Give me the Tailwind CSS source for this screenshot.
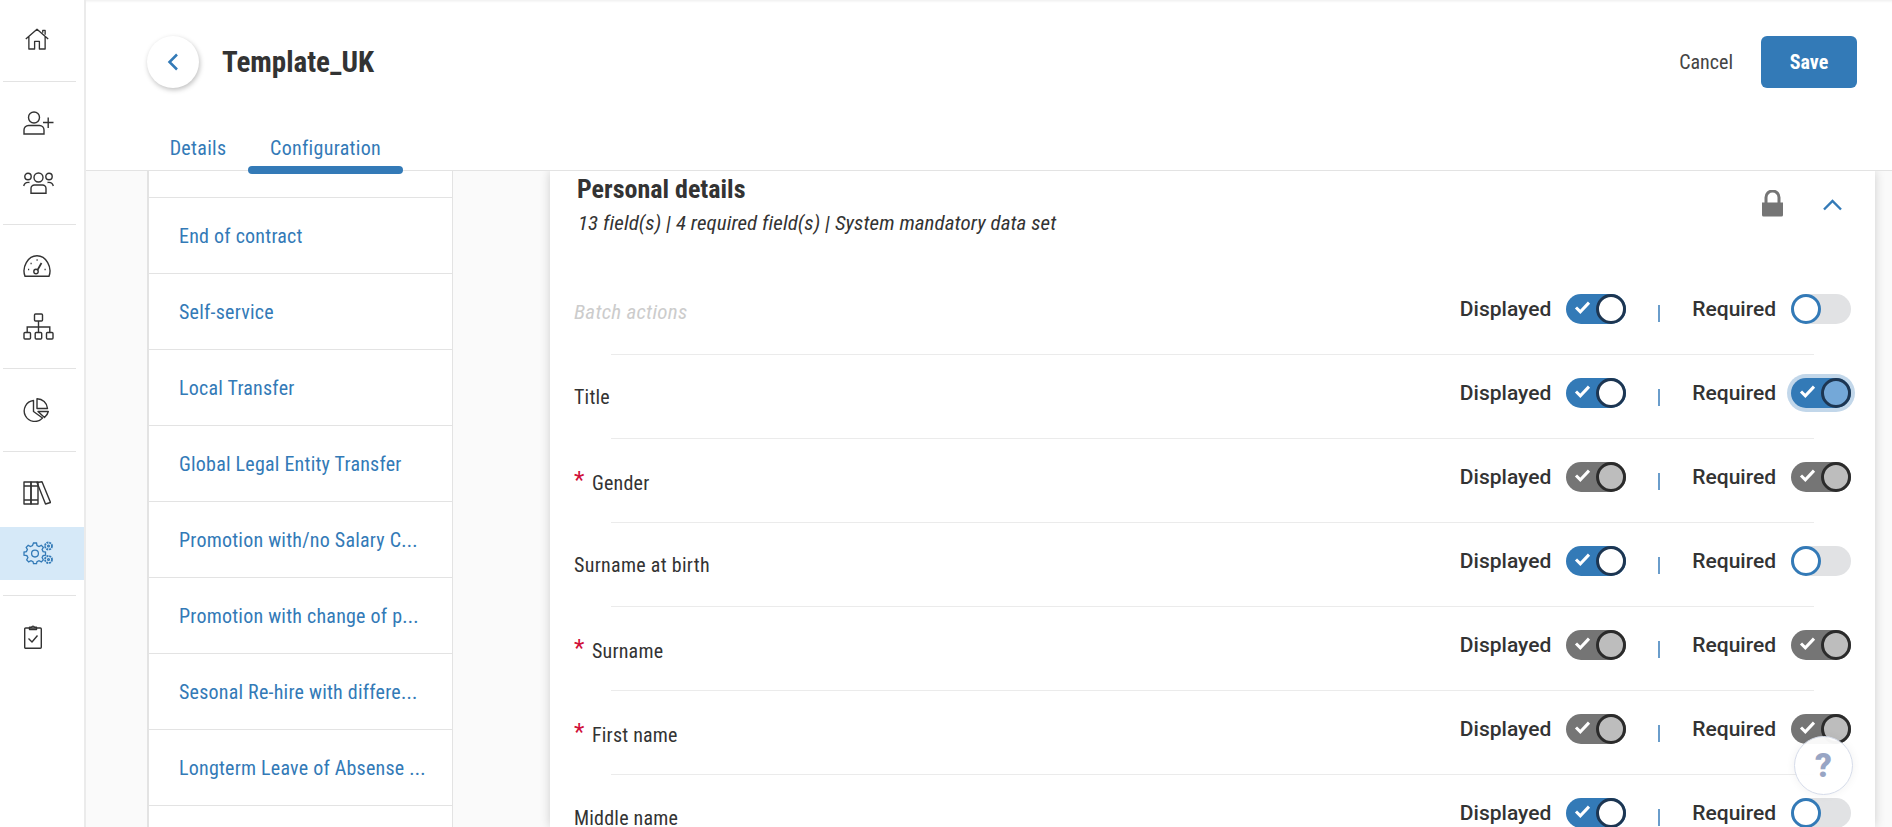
<!DOCTYPE html>
<html>
<head>
<meta charset="utf-8">
<script src="https://cdn.jsdelivr.net/npm/@tailwindcss/browser@4"></script>
</head>
<body class="relative h-[827px] w-[1892px] overflow-hidden bg-white font-['Roboto',sans-serif] [font-stretch:75%] text-[#333]">
<div class="flex h-[827px] w-[1892px]">
  <nav class="flex h-full w-[86px] shrink-0 flex-col border-r-[2px] border-[#ebebeb] bg-white pt-[0px] text-[#333]">
    <div class="h-[81px] pt-[28px] pl-[25px]">
      <svg class="h-[22px] w-[24px]" viewBox="0 0 25 23" fill="none" stroke="currentColor" stroke-width="1.4" stroke-linejoin="round"><path d="M.8 11.500 12.500 1.200 24.200 11.500M4 9V22H10V14H15V22H21V9"/><path d="M18.500 5V2.500H21V7"/></svg>
    </div>
    <div class="ml-[3px] h-px w-[73px] bg-[#e3e3e3]"></div>
    <div class="flex h-[142px] flex-col gap-[37px] pt-[29px] pl-[23px]">
      <svg class="h-[24px] w-[31px]" viewBox="0 0 31 24" fill="none" stroke="currentColor" stroke-width="1.4"><circle cx="11" cy="6.500" r="5.500"/><path d="M1 23V19a4.500 4.500 0 0 1 4.500-4.500H16.500A4.500 4.500 0 0 1 21 19V23Z"/><path d="M20 11.500H30.500M25.200 6.500V17"/></svg>
      <svg class="h-[22px] w-[31px]" viewBox="0 0 31 22" fill="none" stroke="currentColor" stroke-width="1.4"><circle cx="15.500" cy="5.500" r="4.500"/><circle cx="5" cy="4.500" r="3.200"/><circle cx="26" cy="4.500" r="3.200"/><path d="M8 21.300V16.500a3.500 3.500 0 0 1 3.500-3.500h8A3.500 3.500 0 0 1 23 16.500V21.300Z"/><path d="M.7 14C1.500 11 3.500 10 6.500 10.500M30.300 14C29.500 11 27.500 10 24.500 10.500"/></svg>
    </div>
    <div class="ml-[3px] h-px w-[73px] bg-[#e3e3e3]"></div>
    <div class="flex h-[143px] flex-col gap-[36px] pt-[30px] pl-[23px]">
      <svg class="h-[22px] w-[28px]" viewBox="0 0 28 22" fill="none" stroke="currentColor" stroke-width="1.4"><path d="M2 21.300C-1.500 12 5 .8 14 .8S29.500 12 26 21.300Z"/><circle cx="13" cy="16.500" r="2.200"/><path d="M14.500 15 18.500 8" stroke-width="1.700"/><path d="M5 14.500h1.200M7.500 8.500h1.200M13.500 5h1.200M21.500 14.500h1.200" stroke-width="1.500"/></svg>
      <svg class="h-[27px] w-[31px]" viewBox="0 0 31 27" fill="none" stroke="currentColor" stroke-width="1.4"><rect x="11.500" y="1" width="8" height="7" rx="1"/><rect x="1" y="19.500" width="6.500" height="6.500" rx="1"/><rect x="12.200" y="19.500" width="6.500" height="6.500" rx="1"/><rect x="23.500" y="19.500" width="6.500" height="6.500" rx="1"/><path d="M15.500 8V19.500M4.200 19.500V14H26.800V19.500"/></svg>
    </div>
    <div class="ml-[3px] h-px w-[73px] bg-[#e3e3e3]"></div>
    <div class="h-[82px] pt-[29px] pl-[23px]">
      <svg class="h-[24px] w-[26px]" viewBox="0 0 26 24" fill="none" stroke="currentColor" stroke-width="1.4" stroke-linejoin="round"><path d="M10.500 2.500A10.500 10.500 0 1 0 19.500 20L10.500 13.500Z"/><path d="M14 .8A10.500 10.500 0 0 1 24.500 10.500H14Z"/><path d="M15 13.500H25.300A11 11 0 0 1 21.500 19.500Z"/></svg>
    </div>
    <div class="ml-[3px] h-px w-[73px] bg-[#e3e3e3]"></div>
    <div class="h-[75px] pt-[29px] pl-[23px]">
      <svg class="h-[24px] w-[28px]" viewBox="0 0 28 24" fill="none" stroke="currentColor" stroke-width="1.4" stroke-linejoin="round"><rect x="1" y="1" width="7" height="22"/><rect x="8" y="1" width="7" height="22"/><path d="M1 5H15M1 19H15"/><path d="M14 1.500 19 .8 27.500 21.500 22.500 23Z"/></svg>
    </div>
    <div class="h-[53px] w-[84px] bg-[#d6e9f8] pt-[14px] pl-[23px] text-[#337ab7]">
      <svg class="h-[24px] w-[31px]" viewBox="0 0 31 24" fill="none" stroke="currentColor" stroke-width="1.300"><path d="M10.500 4.500h3l.5 2.500 2 1 2.300-1.200 2 2-1.200 2.300 1 2 2.400.5v3l-2.400.5-1 2 1.200 2.300-2 2-2.300-1.200-2 1-.5 2h-3l-.5-2-2-1-2.300 1.200-2-2 1.200-2.300-1-2L1 16.600v-3l2.400-.5 1-2-1.200-2.300 2-2 2.300 1.200 2-1Z" transform="translate(0 -2.500)"/><circle cx="12" cy="12.600" r="3.400"/><circle cx="25.500" cy="5" r="3.500" stroke-dasharray="2 .8" stroke-width="1.800"/><circle cx="25.500" cy="5" r=".9"/><circle cx="25.500" cy="18.500" r="3.500" stroke-dasharray="2 .8" stroke-width="1.800"/><circle cx="25.500" cy="18.500" r=".9"/></svg>
    </div>
    <div class="mt-[15px] ml-[3px] h-px w-[73px] bg-[#e3e3e3]"></div>
    <div class="h-[70px] pt-[29px] pl-[24px]">
      <svg class="h-[24px] w-[18px]" viewBox="0 0 18 24" fill="none" stroke="currentColor" stroke-width="1.400" stroke-linejoin="round"><rect x=".7" y="3" width="16.600" height="20.300" rx="1"/><path d="M5.500 3V2.200H7.500a1.600 1.600 0 0 1 3 0H12.500V4.500H5.500Z"/><path d="M4.500 13.500 8 17 13.500 10.500"/></svg>
    </div>
  </nav>

  <div class="flex min-w-0 flex-1 flex-col">
    <header class="relative h-[171px] shrink-0 border-b border-[#e3e3e3] bg-white shadow-[inset_0_3px_3px_-2px_rgba(0,0,0,0.08)]">
      <div class="flex h-[124px] items-center justify-between pr-[35px] pl-[61px]">
        <div class="flex items-center">
          <div class="flex h-[52px] w-[52px] items-center justify-center rounded-full bg-white shadow-[1px_2px_5px_rgba(0,0,0,0.25)]">
            <svg class="h-[18px] w-[12px]" viewBox="0 0 12 18" fill="none" stroke="#337ab7" stroke-width="2.500"><path d="M10 1.500 2.500 9 10 16.500"/></svg>
          </div>
          <h1 class="ml-[23px] text-[29px] leading-none font-bold text-[#333]">Template_UK</h1>
        </div>
        <div class="flex items-center gap-[28px]">
          <span class="text-[20px] text-[#444]">Cancel</span>
          <button class="flex h-[52px] w-[96px] items-center justify-center rounded-[6px] bg-[#337ab7] text-[20px] font-bold text-white">Save</button>
        </div>
      </div>
      <div class="flex h-[46px] pl-[62px] text-[20px] tracking-[0.3px] text-[#337ab7]">
        <div class="flex h-full w-[100px] items-center justify-center pt-[2px]">Details</div>
        <div class="relative flex h-full w-[155px] items-center justify-center pt-[2px]">Configuration<span class="absolute right-0 bottom-[-4px] left-0 h-[8px] rounded-full bg-[#337ab7]"></span></div>
      </div>
    </header>

    <div class="flex min-h-0 flex-1 bg-[#fafafa]">
      <aside class="ml-[61px] w-[306px] shrink-0 self-start border-r border-l-[2px] border-[#e3e3e3] bg-white text-[20px] tracking-[0.22px] text-[#337ab7]">
        <div class="h-[27px] border-b border-[#e3e3e3]"></div>
        <div class="flex h-[76px] items-center border-b border-[#e3e3e3] pl-[30px]">End of contract</div>
        <div class="flex h-[76px] items-center border-b border-[#e3e3e3] pl-[30px]">Self-service</div>
        <div class="flex h-[76px] items-center border-b border-[#e3e3e3] pl-[30px]">Local Transfer</div>
        <div class="flex h-[76px] items-center border-b border-[#e3e3e3] pl-[30px]">Global Legal Entity Transfer</div>
        <div class="flex h-[76px] items-center border-b border-[#e3e3e3] pl-[30px]">Promotion with/no Salary C...</div>
        <div class="flex h-[76px] items-center border-b border-[#e3e3e3] pl-[30px]">Promotion with change of p...</div>
        <div class="flex h-[76px] items-center border-b border-[#e3e3e3] pl-[30px]">Sesonal Re-hire with differe...</div>
        <div class="flex h-[76px] items-center border-b border-[#e3e3e3] pl-[30px]">Longterm Leave of Absense ...</div>
        <div class="h-[30px]"></div>
      </aside>

      <section class="mr-[17px] ml-[97px] min-w-0 flex-1 bg-white shadow-[0_0_10px_rgba(0,0,0,0.18)]">
        <div class="flex h-[99px] items-start justify-between pr-[33px] pl-[27px]">
          <div>
            <div class="mt-[3px] text-[26px] leading-[30px] font-bold text-[#333]">Personal details</div>
            <div class="mt-[6px] ml-[1px] text-[21px] leading-[26px] tracking-[0.06px] text-[#333] italic">13 field(s) | 4 required field(s) | System mandatory data set</div>
          </div>
          <div class="mt-[19px] flex items-start gap-[40px]">
            <svg class="h-[27px] w-[21px]" viewBox="0 0 21 27" fill="#757575"><path d="M0 12.500H21V25a1.500 1.500 0 0 1-1.500 1.500H1.500A1.500 1.500 0 0 1 0 25Z"/><path d="M4 14V7.500a6.500 6.500 0 0 1 13 0V14" fill="none" stroke="#757575" stroke-width="3"/></svg>
            <svg class="mt-[9px] h-[12px] w-[19px]" viewBox="0 0 19 12" fill="none" stroke="#337ab7" stroke-width="2.400"><path d="M1 10.500 9.500 2 18 10.500"/></svg>
          </div>
        </div>

        <div class="h-[84px] pr-[24px] pl-[24px]">
          <div class="flex h-[83px] items-center justify-between">
            <span class="mt-[3px] text-[21px] tracking-[0.25px] text-[#ccc] italic">Batch actions</span>
            <div class="mb-[6px] flex items-center text-[21px] font-medium [font-stretch:100%] text-[#333]"><span class="mt-[2px]">Displayed</span>
              <span class="relative ml-[15px] flex h-[30px] w-[60px] rounded-full bg-[#337ab7]"><svg class="mt-[7px] ml-[8px] h-[13px] w-[17px]" viewBox="0 0 15 12" fill="none" stroke="white" stroke-width="2.800"><path d="M1.500 6 5.500 10 13.500 1.500"/></svg><span class="absolute right-0 h-[30px] w-[30px] rounded-full border-[3px] border-[#1d3652] bg-white"></span></span>
              <span class="mx-[32px] mt-[9px] h-[17px] w-[2px] bg-[#6a9dcb]"></span><span class="mt-[2px]">Required</span>
              <span class="relative ml-[15px] h-[30px] w-[60px] rounded-full bg-[#e1e2e4]"><span class="absolute left-0 h-[30px] w-[30px] rounded-full border-[3px] border-[#337ab7] bg-white"></span></span>
            </div>
          </div>
          <div class="mt-[1px] mr-[37px] ml-[37px] h-px bg-[#ebebeb]"></div>
        </div>
        <div class="h-[84px] pr-[24px] pl-[24px]">
          <div class="flex h-[83px] items-center justify-between">
            <span class="mt-[3px] text-[20px] tracking-[0.2px] text-[#333]">Title</span>
            <div class="mb-[6px] flex items-center text-[21px] font-medium [font-stretch:100%] text-[#333]"><span class="mt-[2px]">Displayed</span>
              <span class="relative ml-[15px] flex h-[30px] w-[60px] rounded-full bg-[#337ab7]"><svg class="mt-[7px] ml-[8px] h-[13px] w-[17px]" viewBox="0 0 15 12" fill="none" stroke="white" stroke-width="2.800"><path d="M1.500 6 5.500 10 13.500 1.500"/></svg><span class="absolute right-0 h-[30px] w-[30px] rounded-full border-[3px] border-[#1d3652] bg-white"></span></span>
              <span class="mx-[32px] mt-[9px] h-[17px] w-[2px] bg-[#6a9dcb]"></span><span class="mt-[2px]">Required</span>
              <span class="relative ml-[15px] flex h-[30px] w-[60px] rounded-full bg-[#337ab7] shadow-[0_0_0_4px_#c2d7ea]"><svg class="mt-[7px] ml-[8px] h-[13px] w-[17px]" viewBox="0 0 15 12" fill="none" stroke="white" stroke-width="2.800"><path d="M1.500 6 5.500 10 13.500 1.500"/></svg><span class="absolute right-0 h-[30px] w-[30px] rounded-full border-[3px] border-[#1d3652] bg-[#74a8d8]"></span></span>
            </div>
          </div>
          <div class="mt-[1px] mr-[37px] ml-[37px] h-px bg-[#ebebeb]"></div>
        </div>
        <div class="h-[84px] pr-[24px] pl-[24px]">
          <div class="flex h-[83px] items-center justify-between">
            <span class="mt-[7px] flex text-[20px] tracking-[0.2px] text-[#333]"><span class="w-[18px] text-[24px] leading-[24px] text-[#d0103a]">*</span>Gender</span>
            <div class="mb-[6px] flex items-center text-[21px] font-medium [font-stretch:100%] text-[#333]"><span class="mt-[2px]">Displayed</span>
              <span class="relative ml-[15px] flex h-[30px] w-[60px] rounded-full bg-[#757575]"><svg class="mt-[7px] ml-[8px] h-[13px] w-[17px]" viewBox="0 0 15 12" fill="none" stroke="white" stroke-width="2.800"><path d="M1.500 6 5.500 10 13.500 1.500"/></svg><span class="absolute right-0 h-[30px] w-[30px] rounded-full border-[3px] border-[#2b2b2b] bg-[#bdbdbd]"></span></span>
              <span class="mx-[32px] mt-[9px] h-[17px] w-[2px] bg-[#6a9dcb]"></span><span class="mt-[2px]">Required</span>
              <span class="relative ml-[15px] flex h-[30px] w-[60px] rounded-full bg-[#757575]"><svg class="mt-[7px] ml-[8px] h-[13px] w-[17px]" viewBox="0 0 15 12" fill="none" stroke="white" stroke-width="2.800"><path d="M1.500 6 5.500 10 13.500 1.500"/></svg><span class="absolute right-0 h-[30px] w-[30px] rounded-full border-[3px] border-[#2b2b2b] bg-[#bdbdbd]"></span></span>
            </div>
          </div>
          <div class="mt-[1px] mr-[37px] ml-[37px] h-px bg-[#ebebeb]"></div>
        </div>
        <div class="h-[84px] pr-[24px] pl-[24px]">
          <div class="flex h-[83px] items-center justify-between">
            <span class="mt-[3px] text-[20px] tracking-[0.3px] text-[#333]">Surname at birth</span>
            <div class="mb-[6px] flex items-center text-[21px] font-medium [font-stretch:100%] text-[#333]"><span class="mt-[2px]">Displayed</span>
              <span class="relative ml-[15px] flex h-[30px] w-[60px] rounded-full bg-[#337ab7]"><svg class="mt-[7px] ml-[8px] h-[13px] w-[17px]" viewBox="0 0 15 12" fill="none" stroke="white" stroke-width="2.800"><path d="M1.500 6 5.500 10 13.500 1.500"/></svg><span class="absolute right-0 h-[30px] w-[30px] rounded-full border-[3px] border-[#1d3652] bg-white"></span></span>
              <span class="mx-[32px] mt-[9px] h-[17px] w-[2px] bg-[#6a9dcb]"></span><span class="mt-[2px]">Required</span>
              <span class="relative ml-[15px] h-[30px] w-[60px] rounded-full bg-[#e1e2e4]"><span class="absolute left-0 h-[30px] w-[30px] rounded-full border-[3px] border-[#337ab7] bg-white"></span></span>
            </div>
          </div>
          <div class="mt-[1px] mr-[37px] ml-[37px] h-px bg-[#ebebeb]"></div>
        </div>
        <div class="h-[84px] pr-[24px] pl-[24px]">
          <div class="flex h-[83px] items-center justify-between">
            <span class="mt-[7px] flex text-[20px] tracking-[0.2px] text-[#333]"><span class="w-[18px] text-[24px] leading-[24px] text-[#d0103a]">*</span>Surname</span>
            <div class="mb-[6px] flex items-center text-[21px] font-medium [font-stretch:100%] text-[#333]"><span class="mt-[2px]">Displayed</span>
              <span class="relative ml-[15px] flex h-[30px] w-[60px] rounded-full bg-[#757575]"><svg class="mt-[7px] ml-[8px] h-[13px] w-[17px]" viewBox="0 0 15 12" fill="none" stroke="white" stroke-width="2.800"><path d="M1.500 6 5.500 10 13.500 1.500"/></svg><span class="absolute right-0 h-[30px] w-[30px] rounded-full border-[3px] border-[#2b2b2b] bg-[#bdbdbd]"></span></span>
              <span class="mx-[32px] mt-[9px] h-[17px] w-[2px] bg-[#6a9dcb]"></span><span class="mt-[2px]">Required</span>
              <span class="relative ml-[15px] flex h-[30px] w-[60px] rounded-full bg-[#757575]"><svg class="mt-[7px] ml-[8px] h-[13px] w-[17px]" viewBox="0 0 15 12" fill="none" stroke="white" stroke-width="2.800"><path d="M1.500 6 5.500 10 13.500 1.500"/></svg><span class="absolute right-0 h-[30px] w-[30px] rounded-full border-[3px] border-[#2b2b2b] bg-[#bdbdbd]"></span></span>
            </div>
          </div>
          <div class="mt-[1px] mr-[37px] ml-[37px] h-px bg-[#ebebeb]"></div>
        </div>
        <div class="h-[84px] pr-[24px] pl-[24px]">
          <div class="flex h-[83px] items-center justify-between">
            <span class="mt-[7px] flex text-[20px] tracking-[0.2px] text-[#333]"><span class="w-[18px] text-[24px] leading-[24px] text-[#d0103a]">*</span>First name</span>
            <div class="mb-[6px] flex items-center text-[21px] font-medium [font-stretch:100%] text-[#333]"><span class="mt-[2px]">Displayed</span>
              <span class="relative ml-[15px] flex h-[30px] w-[60px] rounded-full bg-[#757575]"><svg class="mt-[7px] ml-[8px] h-[13px] w-[17px]" viewBox="0 0 15 12" fill="none" stroke="white" stroke-width="2.800"><path d="M1.500 6 5.500 10 13.500 1.500"/></svg><span class="absolute right-0 h-[30px] w-[30px] rounded-full border-[3px] border-[#2b2b2b] bg-[#bdbdbd]"></span></span>
              <span class="mx-[32px] mt-[9px] h-[17px] w-[2px] bg-[#6a9dcb]"></span><span class="mt-[2px]">Required</span>
              <span class="relative ml-[15px] flex h-[30px] w-[60px] rounded-full bg-[#757575]"><svg class="mt-[7px] ml-[8px] h-[13px] w-[17px]" viewBox="0 0 15 12" fill="none" stroke="white" stroke-width="2.800"><path d="M1.500 6 5.500 10 13.500 1.500"/></svg><span class="absolute right-0 h-[30px] w-[30px] rounded-full border-[3px] border-[#2b2b2b] bg-[#bdbdbd]"></span></span>
            </div>
          </div>
          <div class="mt-[1px] mr-[37px] ml-[37px] h-px bg-[#ebebeb]"></div>
        </div>
        <div class="h-[84px] pr-[24px] pl-[24px]">
          <div class="flex h-[83px] items-center justify-between">
            <span class="mt-[4px] text-[20px] tracking-[0.2px] text-[#333]">Middle name</span>
            <div class="mb-[6px] flex items-center text-[21px] font-medium [font-stretch:100%] text-[#333]"><span class="mt-[2px]">Displayed</span>
              <span class="relative ml-[15px] flex h-[30px] w-[60px] rounded-full bg-[#337ab7]"><svg class="mt-[7px] ml-[8px] h-[13px] w-[17px]" viewBox="0 0 15 12" fill="none" stroke="white" stroke-width="2.800"><path d="M1.500 6 5.500 10 13.500 1.500"/></svg><span class="absolute right-0 h-[30px] w-[30px] rounded-full border-[3px] border-[#1d3652] bg-white"></span></span>
              <span class="mx-[32px] mt-[9px] h-[17px] w-[2px] bg-[#6a9dcb]"></span><span class="mt-[2px]">Required</span>
              <span class="relative ml-[15px] h-[30px] w-[60px] rounded-full bg-[#e1e2e4]"><span class="absolute left-0 h-[30px] w-[30px] rounded-full border-[3px] border-[#337ab7] bg-white"></span></span>
            </div>
          </div>
        </div>
      </section>
    </div>
  </div>
</div>
<div class="absolute top-[736px] left-[1794px] flex h-[59px] w-[59px] items-center justify-center rounded-full border border-[#d5dbe9] bg-white/95 text-[33px] font-black [font-stretch:100%] text-[#98a5c4] shadow-[0_0_10px_rgba(0,0,0,0.06)]">?</div>
</body>
</html>
